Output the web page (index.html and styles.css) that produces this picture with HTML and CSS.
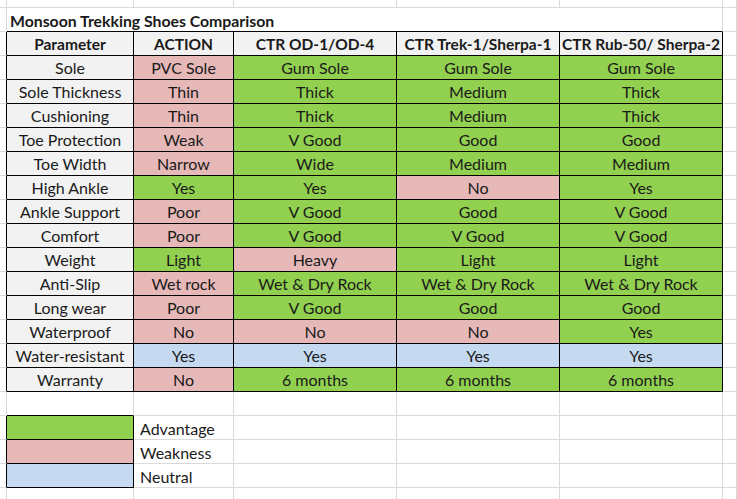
FILE: index.html
```html
<!DOCTYPE html>
<html>
<head>
<meta charset="utf-8">
<link rel="stylesheet" href="styles.css">
</head>
<body>
<div class="sheet">
  <div class="row top"><div class="c"></div><div class="c"></div><div class="c"></div><div class="c"></div><div class="c"></div><div class="c"></div><div class="c"></div><div class="c"></div></div>
  <div class="row"><div class="c"></div><div class="c title">Monsoon Trekking Shoes Comparison</div><div class="c"></div><div class="c"></div></div>
  <div class="row"><div class="c e"></div><div class="t h">Parameter</div><div class="t h">ACTION</div><div class="t h">CTR OD-1/OD-4</div><div class="t h">CTR Trek-1/Sherpa-1</div><div class="t h">CTR Rub-50/ Sherpa-2</div><div class="c"></div><div class="c"></div></div>
  <div class="row"><div class="c e"></div><div class="t p">Sole</div><div class="t w">PVC Sole</div><div class="t a">Gum Sole</div><div class="t a">Gum Sole</div><div class="t a">Gum Sole</div><div class="c"></div><div class="c"></div></div>
  <div class="row"><div class="c e"></div><div class="t p">Sole Thickness</div><div class="t w">Thin</div><div class="t a">Thick</div><div class="t a">Medium</div><div class="t a">Thick</div><div class="c"></div><div class="c"></div></div>
  <div class="row"><div class="c e"></div><div class="t p">Cushioning</div><div class="t w">Thin</div><div class="t a">Thick</div><div class="t a">Medium</div><div class="t a">Thick</div><div class="c"></div><div class="c"></div></div>
  <div class="row"><div class="c e"></div><div class="t p">Toe Protection</div><div class="t w">Weak</div><div class="t a">V Good</div><div class="t a">Good</div><div class="t a">Good</div><div class="c"></div><div class="c"></div></div>
  <div class="row"><div class="c e"></div><div class="t p">Toe Width</div><div class="t w">Narrow</div><div class="t a">Wide</div><div class="t a">Medium</div><div class="t a">Medium</div><div class="c"></div><div class="c"></div></div>
  <div class="row"><div class="c e"></div><div class="t p">High Ankle</div><div class="t a">Yes</div><div class="t a">Yes</div><div class="t w">No</div><div class="t a">Yes</div><div class="c"></div><div class="c"></div></div>
  <div class="row"><div class="c e"></div><div class="t p">Ankle Support</div><div class="t w">Poor</div><div class="t a">V Good</div><div class="t a">Good</div><div class="t a">V Good</div><div class="c"></div><div class="c"></div></div>
  <div class="row"><div class="c e"></div><div class="t p">Comfort</div><div class="t w">Poor</div><div class="t a">V Good</div><div class="t a">V Good</div><div class="t a">V Good</div><div class="c"></div><div class="c"></div></div>
  <div class="row"><div class="c e"></div><div class="t p">Weight</div><div class="t a">Light</div><div class="t w">Heavy</div><div class="t a">Light</div><div class="t a">Light</div><div class="c"></div><div class="c"></div></div>
  <div class="row"><div class="c e"></div><div class="t p">Anti-Slip</div><div class="t w">Wet rock</div><div class="t a">Wet &amp; Dry Rock</div><div class="t a">Wet &amp; Dry Rock</div><div class="t a">Wet &amp; Dry Rock</div><div class="c"></div><div class="c"></div></div>
  <div class="row"><div class="c e"></div><div class="t p">Long wear</div><div class="t w">Poor</div><div class="t a">V Good</div><div class="t a">Good</div><div class="t a">Good</div><div class="c"></div><div class="c"></div></div>
  <div class="row"><div class="c e"></div><div class="t p">Waterproof</div><div class="t w">No</div><div class="t w">No</div><div class="t w">No</div><div class="t a">Yes</div><div class="c"></div><div class="c"></div></div>
  <div class="row"><div class="c e"></div><div class="t p">Water-resistant</div><div class="t n">Yes</div><div class="t n">Yes</div><div class="t n">Yes</div><div class="t n">Yes</div><div class="c"></div><div class="c"></div></div>
  <div class="row"><div class="c e"></div><div class="t p">Warranty</div><div class="t w">No</div><div class="t a">6 months</div><div class="t a">6 months</div><div class="t a">6 months</div><div class="c"></div><div class="c"></div></div>
  <div class="row"><div class="c"></div><div class="c tb"></div><div class="c"></div><div class="c"></div><div class="c"></div><div class="c"></div><div class="c"></div><div class="c"></div></div>
  <div class="row"><div class="c e"></div><div class="lg a"></div><div class="c label">Advantage</div><div class="c"></div><div class="c"></div><div class="c"></div><div class="c"></div><div class="c"></div></div>
  <div class="row"><div class="c e"></div><div class="lg w"></div><div class="c label">Weakness</div><div class="c"></div><div class="c"></div><div class="c"></div><div class="c"></div><div class="c"></div></div>
  <div class="row"><div class="c e"></div><div class="lg n"></div><div class="c label">Neutral</div><div class="c"></div><div class="c"></div><div class="c"></div><div class="c"></div><div class="c"></div></div>
  <div class="row"><div class="c"></div><div class="c"></div><div class="c"></div><div class="c"></div><div class="c"></div><div class="c"></div><div class="c"></div><div class="c"></div></div>
</div>
</body>
</html>
```
FILE: styles.css
```css
html, body {
  margin: 0;
  padding: 0;
  background: #ffffff;
  overflow: hidden;
}
.sheet {
  width: 737px;
  height: 499px;
  overflow: hidden;
  font-family: Lato, "Open Sans", sans-serif;
  font-size: 16px;
  color: #1a1a1a;
}
.row {
  display: grid;
  grid-template-columns: 7px 127px 100px 163px 163px 163px 14px 40px;
  height: 24px;
}
.row.top {
  height: 8px;
}
.row > div {
  box-sizing: border-box;
  min-width: 0;
  white-space: nowrap;
}
.c {
  border-right: 1px solid #dadada;
  border-bottom: 1px solid #dadada;
}
.e {
  border-right-color: #000;
}
.tb {
  border-bottom-color: #000;
}
.title {
  grid-column: span 5;
  border-bottom-color: #000;
  font-weight: bold;
  font-size: 15.8px;
  display: flex;
  align-items: flex-end;
  padding: 0 0 0 3px;
  line-height: 20px;
}
.t {
  border-right: 1px solid #000;
  border-bottom: 1px solid #000;
  display: flex;
  align-items: center;
  justify-content: center;
  line-height: 20px;
}
.h {
  background: #f2f2f2;
  font-weight: bold;
  font-size: 15.5px;
}
.p {
  background: #f2f2f2;
}
.a {
  background: #92d050;
}
.w {
  background: #e6b8b7;
}
.n {
  background: #c5d9f1;
}
.lg {
  border-right: 1px solid #000;
  border-bottom: 1px solid #000;
}
.label {
  display: flex;
  align-items: flex-end;
  padding: 0 0 0 6px;
  line-height: 20px;
}
```
